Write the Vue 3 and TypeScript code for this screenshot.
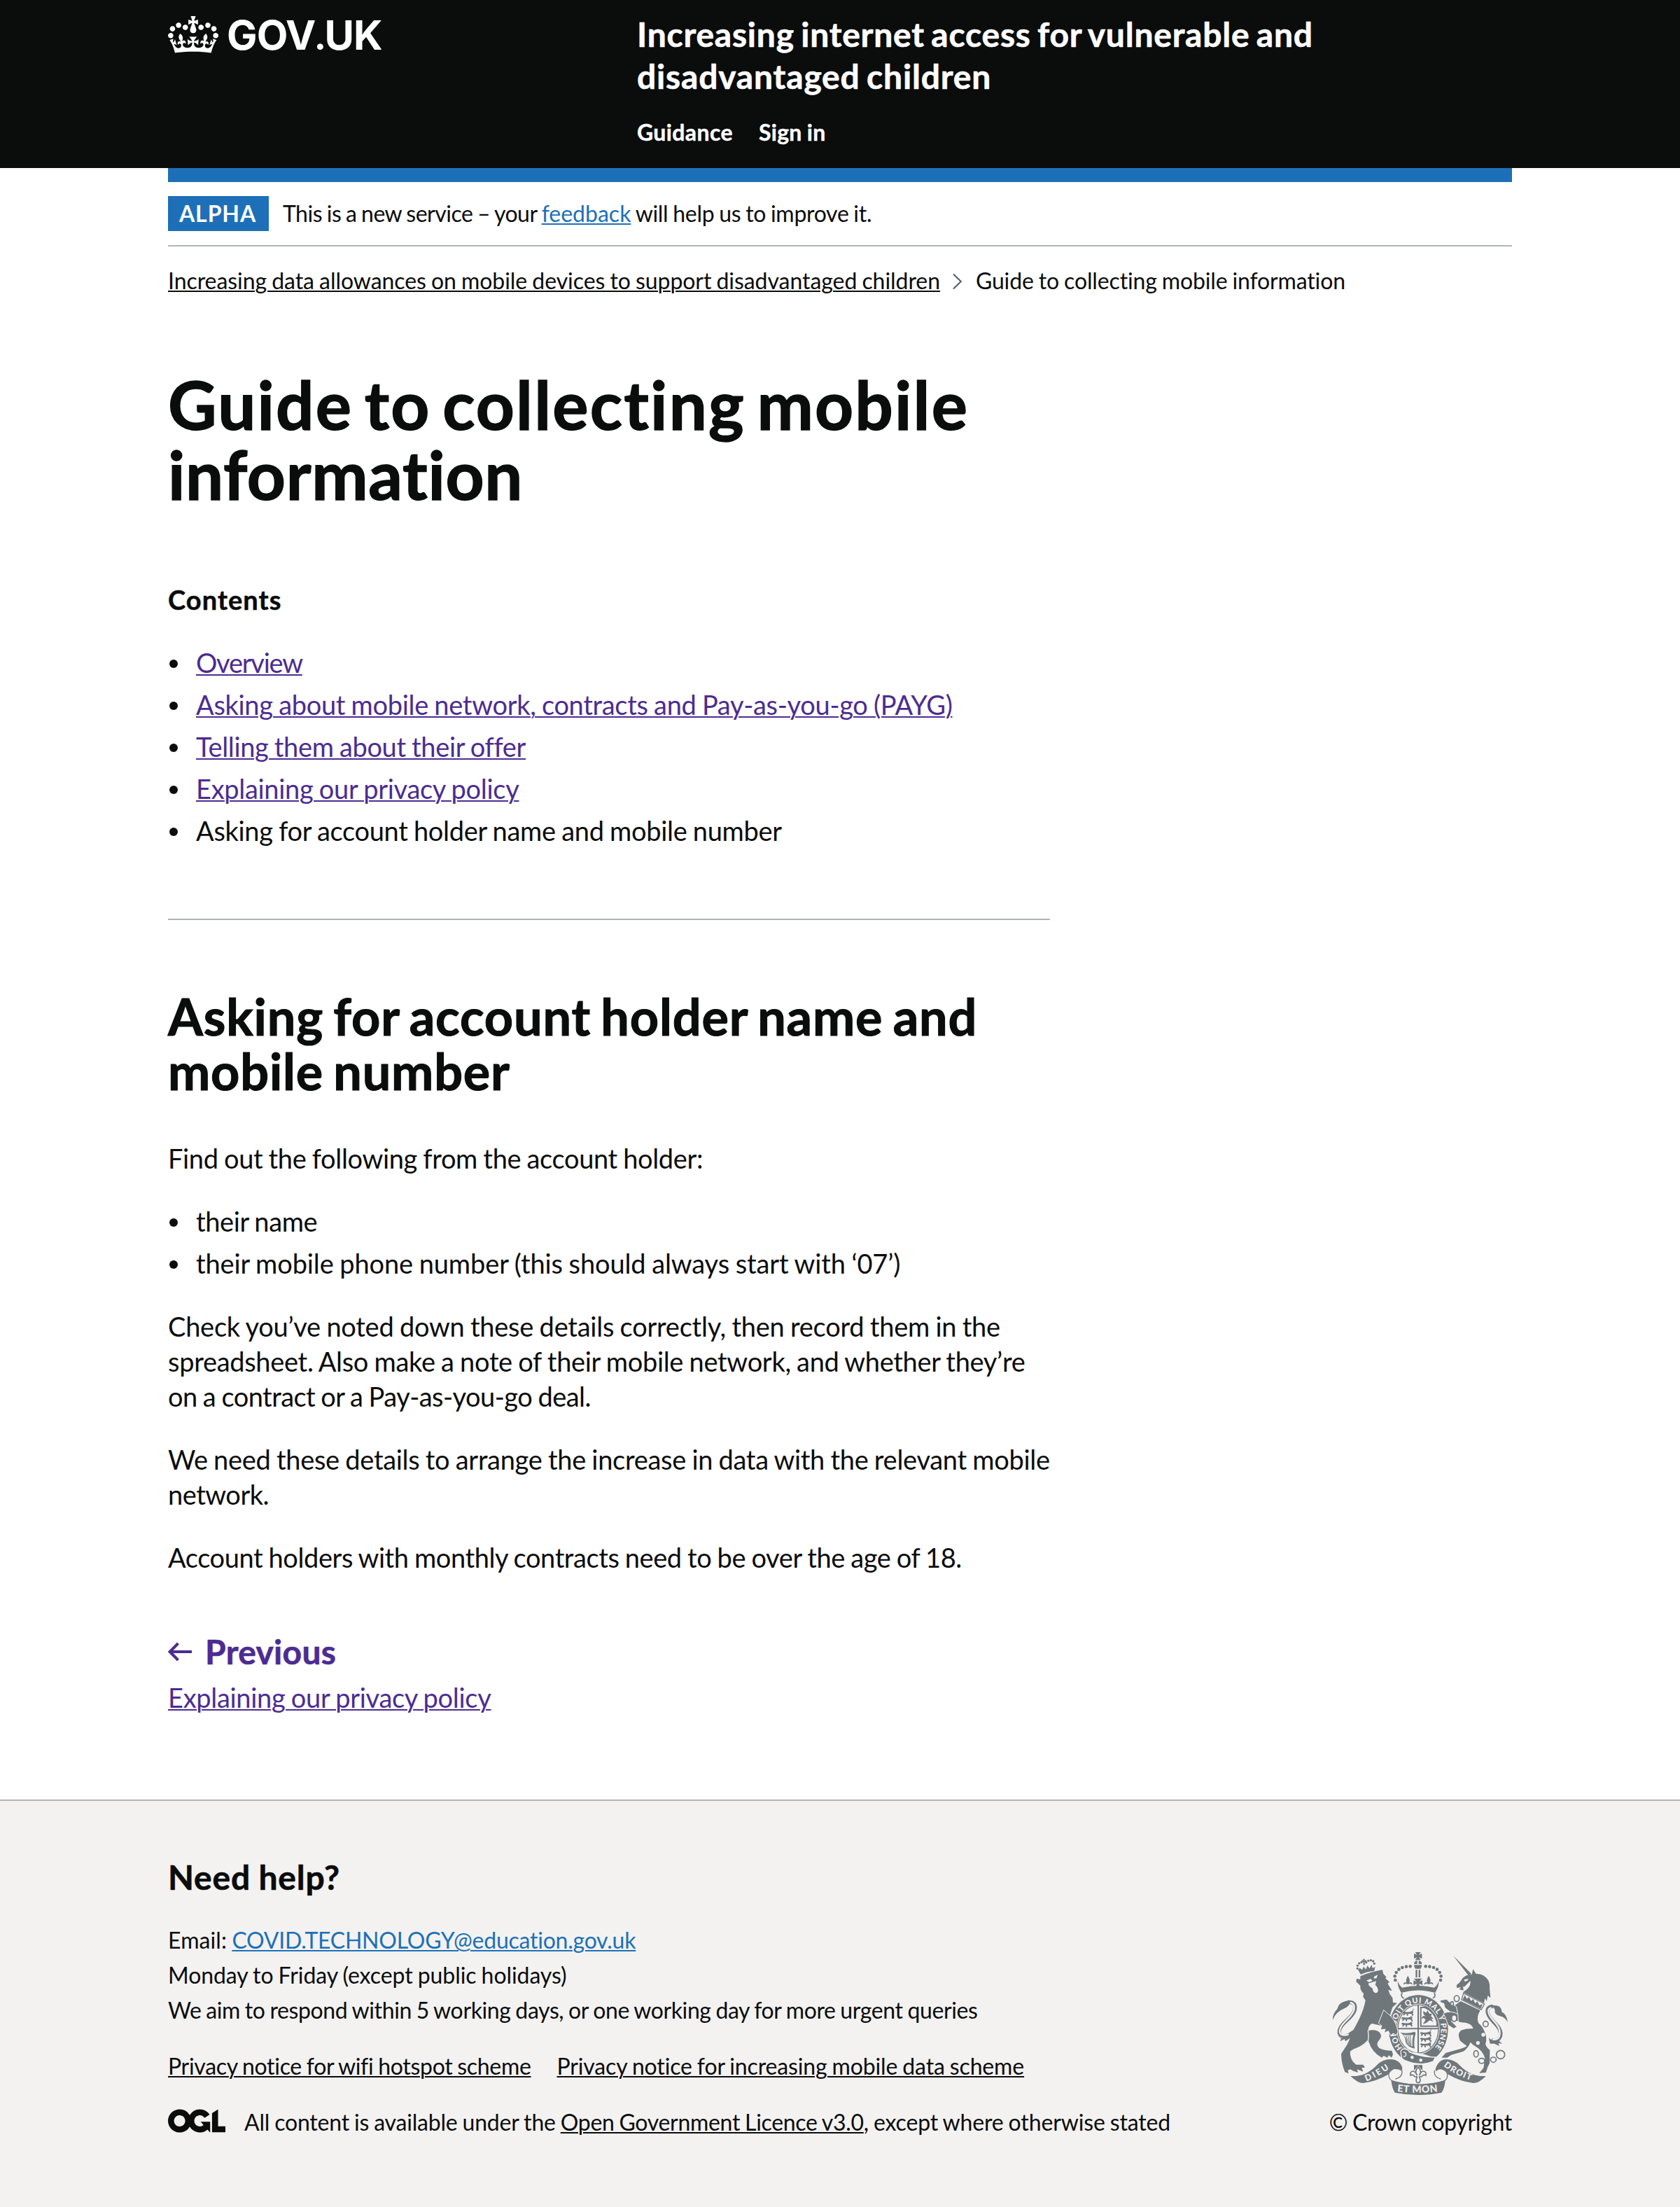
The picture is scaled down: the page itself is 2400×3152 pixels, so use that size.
<script setup lang="ts">
interface TextRun {
  text: string
  /** letter-spacing in px */
  track: number
  href?: string
}

const track = (px: number) => ({ letterSpacing: `${px}px` })

const serviceName: TextRun[] = [
  { text: 'Increasing internet access for vulnerable and', track: 0.78 },
  { text: 'disadvantaged children', track: 0.82 },
]

const navigation: TextRun[] = [
  { text: 'Guidance', track: 0.39, href: '#' },
  { text: 'Sign in', track: 0.3, href: '#' },
]

const contents: TextRun[] = [
  { text: 'Overview', track: -1.25, href: '#' },
  { text: 'Asking about mobile network, contracts and Pay-as-you-go (PAYG)', track: -0.31, href: '#' },
  { text: 'Telling them about their offer', track: -0.35, href: '#' },
  { text: 'Explaining our privacy policy', track: -0.3, href: '#' },
  { text: 'Asking for account holder name and mobile number', track: -0.31 },
]

const details: TextRun[] = [
  { text: 'their name', track: -0.4 },
  { text: 'their mobile phone number (this should always start with ‘07’)', track: -0.11 },
]

const paragraphs: TextRun[][] = [
  [
    { text: 'Check you’ve noted down these details correctly, then record them in the', track: -0.25 },
    { text: 'spreadsheet. Also make a note of their mobile network, and whether they’re', track: -0.31 },
    { text: 'on a contract or a Pay-as-you-go deal.', track: -0.54 },
  ],
  [
    { text: 'We need these details to arrange the increase in data with the relevant mobile', track: -0.3 },
    { text: 'network.', track: -0.5 },
  ],
  [{ text: 'Account holders with monthly contracts need to be over the age of 18.', track: -0.41 }],
]

/* Pearls on the arches of the large crown in the royal arms */
const pearls: [number, number][] = [
  [464, 145], [447, 146], [430, 150], [415, 158], [404, 171], [398, 187], [400, 204],
  [530, 145], [547, 146], [564, 150], [579, 158], [590, 171], [596, 187], [594, 204],
]

/* Pearls on the lion's crown */
const lionPearls: [number, number][] = [
  [238, 154], [238, 142], [245, 132], [255, 127], [275, 128], [284, 121], [295, 119], [305, 123], [310, 133],
]

/* Passant lions stacked in the first and fourth quarters */
const passants: [number, number][] = [
  [430, 336], [426, 360], [426, 384], [506, 424], [506, 448], [506, 472],
]
</script>

<template>
  <div class="page">
    <header class="header">
      <div class="container header__inner">
        <a class="logo" href="#">
          <svg class="logo__crown" viewBox="0 0 132 97" width="72" height="53">
            <path fill="currentColor" fill-rule="evenodd" d="M25 30.2c3.5 1.5 7.7-.2 9.1-3.7 1.5-3.6-.2-7.8-3.9-9.2-3.6-1.4-7.6.3-9.1 3.9-1.4 3.5.3 7.5 3.9 9zM9 39.5c3.6 1.5 7.8-.2 9.2-3.7 1.5-3.6-.2-7.8-3.9-9.1-3.6-1.5-7.6.2-9.1 3.8-1.4 3.5.3 7.5 3.8 9zM4.4 57.2c3.5 1.5 7.7-.2 9.1-3.8 1.5-3.6-.2-7.7-3.9-9.1-3.5-1.5-7.6.3-9.1 3.8-1.4 3.5.3 7.6 3.9 9.1zm38.3-21.4c3.5 1.5 7.7-.2 9.1-3.8 1.5-3.6-.2-7.7-3.9-9.1-3.6-1.5-7.6.3-9.1 3.8-1.3 3.6.4 7.7 3.9 9.1zm64.4-5.6c-3.6 1.5-7.8-.2-9.1-3.7-1.5-3.6.2-7.8 3.8-9.2 3.6-1.4 7.7.3 9.2 3.9 1.3 3.5-.4 7.5-3.9 9zm15.9 9.3c-3.6 1.5-7.7-.2-9.1-3.7-1.5-3.6.2-7.8 3.7-9.1 3.6-1.5 7.7.2 9.2 3.8 1.5 3.5-.3 7.5-3.8 9zm4.7 17.7c-3.6 1.5-7.8-.2-9.2-3.8-1.5-3.6.2-7.7 3.9-9.1 3.6-1.5 7.7.3 9.2 3.8 1.3 3.5-.4 7.6-3.9 9.1zM89.3 35.8c-3.6 1.5-7.8-.2-9.2-3.8-1.4-3.6.2-7.7 3.9-9.1 3.6-1.5 7.7.3 9.2 3.8 1.4 3.6-.3 7.7-3.9 9.1zM69.7 17.7l8.9 4.7V9.3l-8.9 2.8c-.2-.3-.5-.6-.9-.9L72.4 0H59.6l3.5 11.2c-.3.3-.6.5-.9.9l-8.8-2.8v13.1l8.8-4.7c.3.3.6.7.9.9l-5 15.4v.1c-.2.8-.4 1.6-.4 2.4 0 4.1 3.1 7.5 7 8.1h.2c.3 0 .7.1 1 .1.4 0 .7 0 1-.1h.2c4-.6 7.1-4.1 7.1-8.1 0-.8-.1-1.7-.4-2.4V34l-5.1-15.4c.4-.2.7-.6 1-.9zM66 92.8c16.9 0 32.8 1.1 47.1 3.2 4-16.9 8.9-26.7 14-33.5l-9.6-3.4c1 4.9 1.1 7.2 0 10.2-1.5-1.4-3-4.3-4.2-8.7L108.6 76c2.8-2 5-3.2 7.5-3.3-4.4 9.4-10 11.9-13.6 11.2-4.3-.8-6.3-4.6-5.6-7.9 1-4.7 5.7-5.9 8-.5 4.3-8.7-3-11.4-7.6-8.8 7.1-7.2 7.9-13.5 2.1-21.1-8 6.1-8.1 12.3-4.5 20.8-4.7-5.4-12.1-2.5-9.5 6.2 3.4-5.2 7.9-2 7.2 3.1-.6 4.3-6.4 7.8-13.5 7.2-10.3-.9-10.9-8-11.2-13.8 2.5-.5 7.1 1.8 11 7.3L80.2 60c-4.1 4.4-8 5.3-12.3 5.4 1.4-4.4 8-11.6 8-11.6H55.5s6.4 7.2 7.9 11.6c-4.2-.1-8-1-12.3-5.4l1.4 16.4c3.9-5.5 8.5-7.7 10.9-7.3-.3 5.8-.9 12.8-11.1 13.8-7.2.6-12.9-2.9-13.5-7.2-.7-5 3.8-8.3 7.1-3.1 2.7-8.7-4.6-11.6-9.4-6.2 3.7-8.5 3.6-14.7-4.6-20.8-5.8 7.6-5 13.9 2.2 21.1-4.7-2.6-11.9.1-7.7 8.8 2.3-5.5 7.1-4.2 8.1.5.7 3.3-1.3 7.1-5.7 7.9-3.5.7-9-1.8-13.5-11.2 2.5.1 4.7 1.3 7.5 3.3l-4.7-15.4c-1.2 4.4-2.7 7.2-4.3 8.7-1.1-3-.9-5.3 0-10.2l-9.5 3.4c5 6.9 9.9 16.7 14 33.5 14.8-2.1 30.8-3.2 47.7-3.2z" />
          </svg>
          <span class="logo__text">GOV<span class="logo__dot">.</span>UK</span>
        </a>
        <div class="header__content">
          <a class="service" href="#">
            <span v-for="l in serviceName" :key="l.text" class="line" :style="track(l.track)">{{ l.text }}</span>
          </a>
          <nav class="nav">
            <a v-for="n in navigation" :key="n.text" :href="n.href" :style="track(n.track)">{{ n.text }}</a>
          </nav>
        </div>
      </div>
    </header>

    <div class="container">
      <div class="bar"></div>
      <div class="phase">
        <strong class="phase__tag">ALPHA</strong>
        <span class="phase__text"><span :style="track(-0.5)">This is a new service – your </span><a class="link" href="#" :style="track(0)">feedback</a><span :style="track(-0.3)"> will help us to improve it.</span></span>
      </div>
      <nav class="crumbs">
        <a class="link link--text" href="#" :style="track(-0.06)">Increasing data allowances on mobile devices to support disadvantaged children</a>
        <svg class="crumbs__chevron" width="14" height="24" viewBox="0 0 14 24">
          <path d="M1 1.5 11.8 12 1 22.5" fill="none" stroke="#505a5f" stroke-width="2" />
        </svg>
        <span :style="track(-0.14)">Guide to collecting mobile information</span>
      </nav>

      <main class="main">
        <h1 class="title">
          <span class="line" :style="track(2.2)">Guide to collecting mobile</span>
          <span class="line" :style="track(0.69)">information</span>
        </h1>
        <h2 class="contents-title">Contents</h2>
        <ul class="list">
          <li v-for="c in contents" :key="c.text">
            <a v-if="c.href" class="link link--visited" :href="c.href" :style="track(c.track)">{{ c.text }}</a>
            <span v-else :style="track(c.track)">{{ c.text }}</span>
          </li>
        </ul>
        <hr class="rule" />
        <h2 class="heading">
          <span class="line" :style="track(0.83)">Asking for account holder name and</span>
          <span class="line" :style="track(0.8)">mobile number</span>
        </h2>
        <p class="body" :style="track(-0.36)">Find out the following from the account holder:</p>
        <ul class="list list--details">
          <li v-for="d in details" :key="d.text"><span :style="track(d.track)">{{ d.text }}</span></li>
        </ul>
        <p v-for="(p, i) in paragraphs" :key="i" class="body">
          <span v-for="l in p" :key="l.text" class="line" :style="track(l.track)">{{ l.text }}</span>
        </p>
        <nav class="previous">
          <a class="previous__title" href="#">
            <svg width="34" height="28" viewBox="0 0 34 28">
              <path d="M34 14H3M14.5 2 2.6 14l11.9 12" fill="none" stroke="currentColor" stroke-width="4" />
            </svg>
            <span>Previous</span>
          </a>
          <a class="link link--visited previous__page" href="#">Explaining our privacy policy</a>
        </nav>
      </main>
    </div>

    <footer class="footer">
      <div class="container footer__inner">
        <div>
          <h2 class="footer__title">Need help?</h2>
          <div class="footer__help">
            <div><span :style="track(0.1)">Email: </span><a class="link" href="#" :style="track(-0.24)">COVID.TECHNOLOGY@education.gov.uk</a></div>
            <div :style="track(-0.07)">Monday to Friday (except public holidays)</div>
            <div :style="track(-0.38)">We aim to respond within 5 working days, or one working day for more urgent queries</div>
          </div>
          <div class="footer__links">
            <a class="link link--text" href="#" :style="track(-0.31)">Privacy notice for wifi hotspot scheme</a>
            <a class="link link--text" href="#" :style="track(-0.14)">Privacy notice for increasing mobile data scheme</a>
          </div>
          <div class="licence">
            <svg class="licence__logo" width="82" height="34" viewBox="0 0 483.2 195.7">
              <path fill="currentColor" d="M421.5 142.8V.1l-50.7 32.3v161.1h112.4v-50.7zm-122.3-9.6A47.12 47.12 0 0 1 221 97.8c0-26 21.1-47.1 47.1-47.1 16.7 0 31.4 8.7 39.7 21.8l42.7-27.2A97.63 97.63 0 0 0 268.1 0c-36.5 0-68.3 20.1-85.1 49.7A98 98 0 0 0 97.8 0C43.9 0 0 43.9 0 97.8s43.9 97.8 97.8 97.8c36.5 0 68.3-20.1 85.1-49.7a97.76 97.76 0 0 0 149.6 25.4l19.4 22.2h3v-87.8h-80l24.3 27.5zM97.8 145c-26 0-47.1-21.1-47.1-47.1s21.1-47.1 47.1-47.1 47.1 21.1 47.1 47.1S123.8 145 97.8 145" />
            </svg>
            <span><span :style="track(-0.19)">All content is available under the </span><a class="link link--text" href="#" :style="track(-0.3)">Open Government Licence v3.0</a><span :style="track(-0.14)">, except where otherwise stated</span></span>
          </div>
        </div>

        <div class="copyright">
          <svg class="arms" width="250" height="204" viewBox="132 84 750 612">
            <defs>
              <path id="garter" d="M430 494A97 113 0 1 1 560 503" />
              <path id="dieu" d="M276 638Q330 616 382 578" />
              <path id="droit" d="M606 572Q665 618 744 639" />
              <path id="etmon" d="M408 681Q497 692 594 681" />
              <g id="lion-passant">
                <path d="M0 6q5-6 11-2q12 2 24-1q7-6 11-1q4 5-2 8q5 5 3 9h-5q0-6-6-7q-8 1-12 0q2 4 0 8h-5q1-7-4-9q-6 5-7 8h-5q2-6 3-9q-6 1-6-4z" />
                <path d="M44 0q5-6 2-10" fill="none" stroke="#6f777b" stroke-width="3" />
              </g>
            </defs>
            <g fill="#6f777b">
              <!-- crown -->
              <path d="M485 84h24l-8 12 13-6v22l-13-6 8 12h-24l8-12-13 6V90l13 6z" />
              <path d="M480 135a17 17 0 0 1 14-15v15zM500 120a17 17 0 0 1 14 15h-14zM480 139h34q0 10-6 16h-22q-6-6-6-16z" />
              <path d="M487 160h7v32h-7zM500 160h7v32h-7z" />
              <circle v-for="([x, y], i) in pearls" :key="i" :cx="x" :cy="y" r="7" />
              <path d="M410 208Q418 230 430 236Q497 220 566 236Q578 230 586 208Q586 232 578 244L571 258Q497 237 425 258L418 244Q411 234 410 208Z" />
              <path d="M454 185q-13 20-4 36h8q9-16-4-36zM543 185q-13 20-4 36h8q9-16-4-36zM480 197h34l-11 14 13-7v22l-13-7v16h-12v-16l-13 7v-22l13 7z" />
              <path d="M436 222q6-12 13-2M472 222q-6-12-13-2M525 222q6-12 13-2M561 222q-6-12-13-2" fill="none" stroke="#6f777b" stroke-width="5" />
              <path d="M445 284c-18-2-23-16-15-25M552 284c18-2 22-16 14-25" fill="none" stroke="#6f777b" stroke-width="5" />

              <!-- lion -->
              <circle v-for="([x, y], i) in lionPearls" :key="`l${i}`" :cx="x" :cy="y" r="5" />
              <path d="M261 113h9l-2 7 8-2v9l-8-2 2 14h-8l1-14-7 1v-8l7 1z" />
              <path d="M240 160L252 180Q280 166 309 165L314 148L303 152L298 138L290 154L280 142L274 158L264 146L258 160L248 152Z" />
              <path d="M250 187Q295 168 345 160L348 176L362 191L357 196L375 212L367 218L386 250L370 246Q374 264 388 280L390 300L408 302L388 320L380 345L376 390L342 400L300 390Q284 398 284 420Q318 412 334 430Q346 446 328 464Q316 478 330 494Q350 506 385 506L390 522L384 536L372 526L366 536L350 528L342 536Q300 514 286 468L280 462Q262 484 232 495Q208 504 206 512Q206 548 232 566L262 566L270 578L256 580L262 596L236 586L240 600L216 592L208 586L196 590L200 604L184 598Q168 560 168 520L182 498Q204 468 212 430Q262 350 272 290L262 276L264 260Q248 250 250 228L232 210L234 198L250 200Z" />
              <path d="M276 206l18-8 8 8-14 7zM308 190l16-9-4 14-10 3zM284 218l14-4 20-6-4 16q14 14 12 26-2 10-12 9-10-4-12-20l-14-10z" fill="#f3f2f1" />
              <path d="M283 418q4 26 0 50" fill="none" stroke="#f3f2f1" stroke-width="4" />
              <path d="M132 374Q130 350 152 326Q156 306 176 298Q196 288 204 296Q208 312 184 324Q144 340 132 374Z" />
              <path d="M148 438L170 452L222 428L206 452L186 466L182 456L164 466L168 454Z" />
              <path d="M196 298Q234 296 226 332Q220 352 190 378Q156 408 160 430Q166 452 204 438L222 425" fill="none" stroke="#6f777b" stroke-width="16" />
              <path d="M206 300Q230 304 222 334Q214 354 188 378Q158 408 162 428Q168 446 200 436" fill="none" stroke="#f3f2f1" stroke-width="7" />

              <!-- garter and shield -->
              <ellipse cx="499" cy="415" rx="132" ry="151" fill="#f3f2f1" />
              <ellipse cx="499" cy="415" rx="127" ry="147" />
              <ellipse cx="498" cy="413" rx="92" ry="108" fill="#f3f2f1" />
              <ellipse cx="498" cy="413" rx="87" ry="103" fill="none" stroke="#6f777b" stroke-width="4" />
              <text class="arms__text" font-size="33"><textPath href="#garter" textLength="500">HONI SOIT QUI MAL Y PENSE</textPath></text>
              <path d="M495 312h6v206h-6zM413 409h172v6H413z" />
              <use v-for="([x, y], i) in passants" :key="`p${i}`" href="#lion-passant" :x="x" :y="y" />
              <path d="M506 318h22q44 18 54 64v22h-76zm6 6v74h64v-14q-12-44-50-60z" fill-rule="evenodd" />
              <path d="M520 336l12 8 6-10 8 14 12 0-6 10 12 12-10 0 10 14-16-8-16 12-14 4 12-18-8-8-10 4 6-12 10 0-8-10z" />
              <path d="M421 428q28 8 62-3l4 6q-10 36-4 66-28-4-38-26-2-30-24-43zm12 9q16 13 18 35 6 12 22 16-2-26 4-50-20 4-44-1z" fill-rule="evenodd" />
              <path d="M446 442l12 36M455 442l8 42M464 441l3 44" stroke="#6f777b" stroke-width="3" />

              <!-- lion's forepaw -->
              <path d="M350 332L382 360Q406 388 411 425L405 440L390 432L380 442L370 422L352 430L357 414L336 416L342 400L328 388Z" stroke="#f3f2f1" stroke-width="3" />

              <!-- buckle -->
              <path d="M424 520Q420 498 440 498Q458 502 460 512Q508 534 572 534L562 552Q508 574 452 552Q436 548 428 538Z" stroke="#f3f2f1" stroke-width="4" />
              <path d="M455 511Q510 514 560 534Q510 536 455 511Z" fill="#f3f2f1" />
              <circle cx="472" cy="535" r="7" fill="#f3f2f1" />
              <circle cx="509" cy="547" r="7" fill="#f3f2f1" />
              <path d="M434 512q12 0 12 10t-12 10" fill="none" stroke="#f3f2f1" stroke-width="4" />

              <!-- unicorn -->
              <path d="M648 99l78 78-12 8z" />
              <path d="M662 226Q680 212 686 198Q700 180 728 180L733 157L746 177Q780 176 798 204Q806 220 804 240L808 280L796 270L792 294L784 282L780 302L690 256L708 242Q724 228 722 206Q706 222 694 234L690 228L692 248L674 244L682 234L664 238Z" />
              <path d="M694 202l20-4-6 9-10 3z" fill="#f3f2f1" />
              <path d="M680 294L764 334Q746 362 756 388Q776 402 788 440Q792 462 786 478Q790 492 805 504L804 560L796 576L788 600L760 602L778 580L784 540Q776 506 744 488Q730 480 722 470Q712 496 690 510L640 524L622 536L598 536L616 516L680 498Q704 490 706 486L678 464Q662 430 686 418Q704 410 734 412Q730 392 700 386Q676 384 668 380Q660 350 664 326L655 312Z" />
              <path d="M692 260L782 306L768 330L684 288Z" fill="#f3f2f1" stroke="#6f777b" stroke-width="4" />
              <path d="M688 288L698 268L706 284L716 276L724 293L734 285L742 303L752 295L760 312L774 306L766 326Z" />
              <path d="M592 290L620 286L634 300L662 318L668 352L640 344L612 322L608 304L594 300Z" stroke="#f3f2f1" stroke-width="3" />
              <path d="M606 346Q640 332 668 350L670 380L650 378L640 380L664 404L650 412L626 396L616 368Z" stroke="#f3f2f1" stroke-width="3" />
              <path d="M822 312Q856 312 856 340Q878 352 882 385Q870 362 848 358Q828 352 826 338Q830 326 810 312Z" />
              <path d="M800 450Q815 470 842 462L858 476L842 474L846 486L824 476L806 476Z" />
              <path d="M818 316Q790 318 796 345Q802 365 828 390Q858 420 850 445Q842 466 812 462" fill="none" stroke="#6f777b" stroke-width="16" />
              <path d="M812 322Q794 324 800 345Q806 364 830 388Q854 418 846 444Q840 460 816 458" fill="none" stroke="#f3f2f1" stroke-width="7" />
              <g fill="#f3f2f1" stroke="#6f777b" stroke-width="5">
                <ellipse cx="643" cy="305" rx="6" ry="9" />
                <ellipse cx="663" cy="283" rx="11" ry="13" />
                <ellipse cx="652" cy="367" rx="11" ry="14" />
                <ellipse cx="787" cy="392" rx="11" ry="12" />
                <ellipse cx="746" cy="520" rx="10" ry="14" />
                <ellipse cx="770" cy="550" rx="13" ry="11" />
                <ellipse cx="820" cy="545" rx="12" ry="11" />
                <circle cx="851" cy="523" r="18" />
              </g>
              <circle cx="777" cy="438" r="8" fill="#f3f2f1" />
              <circle cx="754" cy="473" r="8" fill="#f3f2f1" />

              <!-- motto scroll -->
              <path d="M480 568h36v24l-18-22-18 22z" />
              <path d="M498 576q18 20 5 36 4-16 18-18 13 2 10 18-12-6-18 6h-10l4 14q-1 12-9 12t-9-12l4-14h-10q-6-12-18-6-3-16 10-18 14 2 18 18-13-16 5-36z" fill="#f3f2f1" stroke="#6f777b" stroke-width="5" />
              <path d="M208 615Q242 617 270 605Q300 591 322 567Q346 543 378 543Q418 543 430 579L428 593Q412 583 396 585Q382 589 372 607Q318 639 262 645Q238 645 208 615ZM788 615Q754 617 726 605Q696 591 674 567Q650 543 618 543Q584 545 572 585L574 595Q586 583 600 587Q614 591 624 607Q678 639 734 645Q760 645 788 615Z" />
              <path d="M373 596q-8 38 30 46 94 20 190 0 38-8 28-42" fill="none" stroke="#6f777b" stroke-width="4" />
              <path d="M428 590q6 28-28 38M569 590q-8 28 26 38" fill="none" stroke="#6f777b" stroke-width="4" />
              <path d="M382 632Q498 668 614 632Q612 668 598 686Q498 706 398 686Q386 668 382 632Z" />
              <text class="arms__text" font-size="37"><textPath href="#dieu" textLength="112">DIEU</textPath></text>
              <text class="arms__text" font-size="37"><textPath href="#droit" textLength="132">DROIT</textPath></text>
              <text class="arms__text" font-size="42"><textPath href="#etmon" textLength="174">ET MON</textPath></text>
            </g>
          </svg>
          <a class="copyright__text" href="#">© Crown copyright</a>
        </div>
      </div>
    </footer>
  </div>
</template>

<style>
body {
  margin: 0;
  background: #f3f2f1;
}
</style>

<style scoped>
.page {
  display: flex;
  flex-direction: column;
  min-height: 3152px;
  background: #fff;
  color: #0b0c0c;
  font-family: Lato, "Liberation Sans", sans-serif;
  font-size: 32px;
  line-height: 40px;
  font-variant-ligatures: none;
  word-spacing: -1px;
  white-space: nowrap;
}

h1,
h2,
p,
ul {
  margin: 0;
  padding: 0;
}

a {
  color: inherit;
  text-decoration: none;
}

.container {
  width: 1920px;
  margin: 0 auto;
}

.line {
  display: block;
}

.link {
  color: #1d70b8;
  text-decoration: underline;
  text-decoration-thickness: 2px;
  text-underline-offset: 2px;
}

.link--text {
  color: #0b0c0c;
}

.link--visited {
  color: #4c2c92;
}

/* Header */
.header {
  height: 240px;
  background: #0b0c0c;
  color: #fff;
  font-weight: 700;
}

.header__inner {
  display: flex;
}

.logo {
  display: flex;
  align-items: flex-start;
  width: 670px;
  box-sizing: border-box;
  padding-top: 23px;
}

.logo__text {
  margin-left: 12px;
  font-family: Inter, "Liberation Sans", sans-serif;
  font-size: 58px;
  line-height: 51px;
  letter-spacing: -0.9px;
}

.logo__dot {
  font-family: Lato, sans-serif;
}

.header__content {
  padding-top: 19px;
}

.service {
  display: block;
  font-size: 48px;
  line-height: 60px;
  word-spacing: -3px;
  -webkit-text-stroke: 0.6px currentColor;
}

.nav {
  display: flex;
  gap: 37px;
  margin-top: 30px;
  -webkit-text-stroke: 0.4px currentColor;
}

/* Phase banner and breadcrumbs */
.bar {
  height: 20px;
  background: #1d70b8;
}

.phase {
  display: flex;
  align-items: flex-start;
  gap: 20px;
  padding: 20px 0;
  border-bottom: 2px solid #b1b4b6;
}

.phase__tag {
  width: 144px;
  height: 50px;
  box-sizing: border-box;
  padding-left: 16px;
  background: #1d70b8;
  color: #fff;
  line-height: 50px;
  letter-spacing: 0.9px;
}

.phase__text {
  line-height: 50px;
}

.crumbs {
  display: flex;
  align-items: center;
  margin-top: 29px;
}

.crumbs__chevron {
  margin: 1px 19px 0 18px;
}

/* Main column */
.main {
  width: 1260px;
  padding-top: 106px;
  font-size: 38px;
  line-height: 50px;
}

.title {
  font-size: 96px;
  line-height: 100px;
  word-spacing: -9px;
  -webkit-text-stroke: 1.4px currentColor;
}

.contents-title {
  margin-top: 104px;
  font-size: 38px;
  line-height: 50px;
  letter-spacing: 1.07px;
  -webkit-text-stroke: 0.5px currentColor;
}

.list {
  display: flex;
  flex-direction: column;
  gap: 10px;
  margin-top: 40px;
  list-style: none;
}

.list li {
  display: flex;
  align-items: center;
}

.list li::before {
  content: "";
  width: 12px;
  height: 12px;
  margin: 4px 26px 0 2px;
  border-radius: 50%;
  background: #0b0c0c;
}

.rule {
  height: 2px;
  margin: 101px 0 98px;
  border: 0;
  background: #b1b4b6;
}

.heading {
  margin-bottom: 61px;
  font-size: 72px;
  line-height: 78px;
  word-spacing: -4px;
  -webkit-text-stroke: 1.1px currentColor;
}

.body {
  margin-top: 40px;
}

.previous {
  display: flex;
  flex-direction: column;
  align-items: flex-start;
  gap: 10px;
  margin: 80px 0 121px;
  color: #4c2c92;
}

.previous__title {
  display: flex;
  align-items: center;
  gap: 19px;
  font-size: 48px;
  font-weight: 700;
  line-height: 60px;
  letter-spacing: 0.3px;
  -webkit-text-stroke: 0.6px currentColor;
}

.previous__page {
  letter-spacing: -0.3px;
}

/* Footer */
.footer {
  flex: 1;
  border-top: 2px solid #b1b4b6;
  background: #f3f2f1;
}

.footer__inner {
  display: flex;
  justify-content: space-between;
  align-items: flex-end;
  padding-top: 79px;
}

.footer__title {
  font-size: 48px;
  line-height: 60px;
  letter-spacing: 0.8px;
  -webkit-text-stroke: 0.6px currentColor;
}

.footer__help {
  margin-top: 35px;
  line-height: 50px;
}

.footer__links {
  display: flex;
  gap: 37px;
  margin-top: 35px;
}

.licence {
  display: flex;
  align-items: center;
  gap: 27px;
  margin-top: 40px;
}

.licence__logo {
  margin-bottom: 4px;
}

.copyright {
  display: flex;
  flex-direction: column;
  align-items: center;
}

.arms {
  margin-bottom: 19px;
}

.arms__text {
  fill: #f3f2f1;
  font-family: Lato, sans-serif;
  font-weight: 900;
  word-spacing: 0;
}

.copyright__text {
  letter-spacing: -0.3px;
}
</style>
